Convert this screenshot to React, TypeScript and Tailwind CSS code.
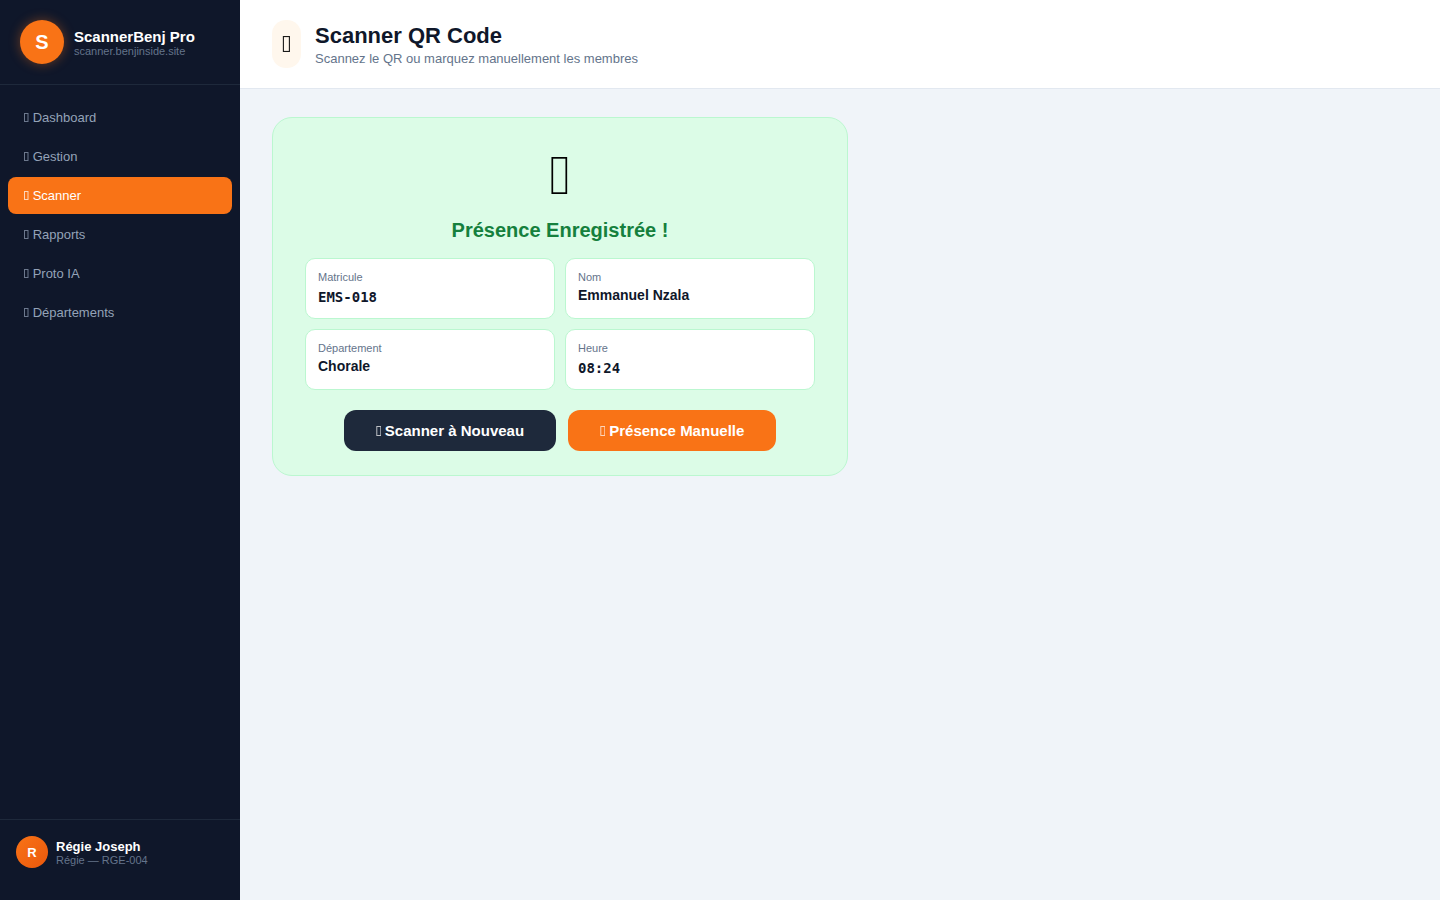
import { useState } from "react";

const navItems = ["Dashboard", "Gestion", "Scanner", "Rapports", "Proto IA", "Départements"];

const details = [
  { label: "Matricule", value: "EMS-018", mono: true },
  { label: "Nom", value: "Emmanuel Nzala", mono: false },
  { label: "Département", value: "Chorale", mono: false },
  { label: "Heure", value: "08:24", mono: true },
];

// Narrow outlined box sitting on the text baseline
const glyphs = {
  sm: { w: 5, h: 9, x: 0.5, boxW: 3.5, stroke: 1, opacity: 0.7 },
  md: { w: 5, h: 10, x: 0.8, boxW: 4, stroke: 1, opacity: 0.7 },
  lg: { w: 9, h: 16, x: 1.4, boxW: 6, stroke: 1.1, opacity: 0.9 },
  xl: { w: 20, h: 37, x: 2.3, boxW: 14, stroke: 1.7, opacity: 1 },
};

function Glyph({ size }: { size: keyof typeof glyphs }) {
  const g = glyphs[size];
  return (
    <svg
      width={g.w}
      height={g.h}
      viewBox={`0 0 ${g.w} ${g.h}`}
      className="inline align-baseline"
      fill="none"
      stroke="currentColor"
      strokeWidth={g.stroke}
      strokeOpacity={g.opacity}
      aria-hidden="true"
    >
      <rect x={g.x} y={g.stroke / 2} width={g.boxW} height={g.h - g.stroke} />
    </svg>
  );
}

function Sidebar() {
  const [active, setActive] = useState("Scanner");

  return (
    <aside className="sticky top-0 flex h-screen w-60 shrink-0 flex-col bg-[#0f172a]">
      <div className="flex items-center gap-2.5 border-b border-[#1e293b] p-5">
        <div className="flex size-11 items-center justify-center rounded-full bg-[#f97316] text-xl font-bold text-white shadow-[0_0_12px_rgba(249,115,22,0.4)]">
          S
        </div>
        <div>
          <div className="text-[15px] leading-[normal] font-bold text-white">ScannerBenj Pro</div>
          <div className="text-[11px] leading-[normal] text-[#64748b]">scanner.benjinside.site</div>
        </div>
      </div>

      <nav className="flex flex-1 flex-col gap-0.5 px-2 py-3.5">
        {navItems.map((label) => (
          <button
            key={label}
            onClick={() => setActive(label)}
            className={`rounded-lg px-4 py-[11px] text-left text-[13px] leading-[15px] ${
              active === label ? "bg-[#f97316] text-white" : "text-[#94a3b8]"
            }`}
          >
            <Glyph size="sm" /> {label}
          </button>
        ))}
      </nav>

      <div className="flex items-center gap-2 border-t border-[#1e293b] px-4 pt-4 pb-8">
        <div className="flex size-8 items-center justify-center rounded-full bg-linear-135 from-[#f97316] to-[#ea580c] text-[13px] leading-[normal] font-bold text-white">
          R
        </div>
        <div>
          <div className="text-[13px] leading-[normal] font-bold text-white">Régie Joseph</div>
          <div className="text-[11px] leading-[normal] text-[#64748b]">Régie — RGE-004</div>
        </div>
      </div>
    </aside>
  );
}

function Header() {
  return (
    <header className="flex items-center gap-3.5 border-b border-[#e2e8f0] bg-white px-8 py-5">
      <div className="rounded-[14px] bg-[#fff7ed] p-2.5 text-2xl leading-7 text-black">
        <Glyph size="lg" />
      </div>
      <div>
        <h1 className="text-[22px] leading-[normal] font-bold text-[#0f172a]">Scanner QR Code</h1>
        <p className="mt-0.5 text-[13px] leading-[normal] text-[#64748b]">
          Scannez le QR ou marquez manuellement les membres
        </p>
      </div>
    </header>
  );
}

function ResultCard() {
  return (
    <section className="max-w-xl rounded-[20px] border border-[#bbf7d0] bg-[#dcfce7] px-8 pt-6 pb-6 text-center">
      <div className="text-[56px] leading-[66px] text-black">
        <Glyph size="xl" />
      </div>
      <h2 className="mt-2.5 text-xl leading-6 font-bold text-[#15803d]">Présence Enregistrée !</h2>
      <dl className="mt-4 grid grid-cols-2 gap-2.5 text-left">
        {details.map((item) => (
          <div key={item.label} className="rounded-[10px] border border-[#bbf7d0] bg-white p-3">
            <dt className="text-[11px] leading-3 text-[#64748b]">{item.label}</dt>
            <dd
              className={`text-sm font-bold text-[#0f172a] ${
                item.mono ? "mt-1.5 font-['DejaVu_Sans_Mono',monospace] leading-[17px]" : "mt-1 leading-4"
              }`}
            >
              {item.value}
            </dd>
          </div>
        ))}
      </dl>
      <div className="mt-5 flex flex-wrap justify-center gap-3">
        <button className="rounded-xl bg-[#1e293b] px-8 py-3 text-[15px] leading-[17px] font-bold text-white">
          <Glyph size="md" /> Scanner à Nouveau
        </button>
        <button className="rounded-xl bg-[#f97316] px-8 py-3 text-[15px] leading-[17px] font-bold text-white">
          <Glyph size="md" /> Présence Manuelle
        </button>
      </div>
    </section>
  );
}

export default function App() {
  return (
    <div className="flex min-h-screen bg-[#f0f4f9] font-['Liberation_Sans',Arial,sans-serif]">
      <Sidebar />
      <div className="min-w-0 flex-1">
        <Header />
        <main className="px-8 py-7">
          <ResultCard />
        </main>
      </div>
    </div>
  );
}
